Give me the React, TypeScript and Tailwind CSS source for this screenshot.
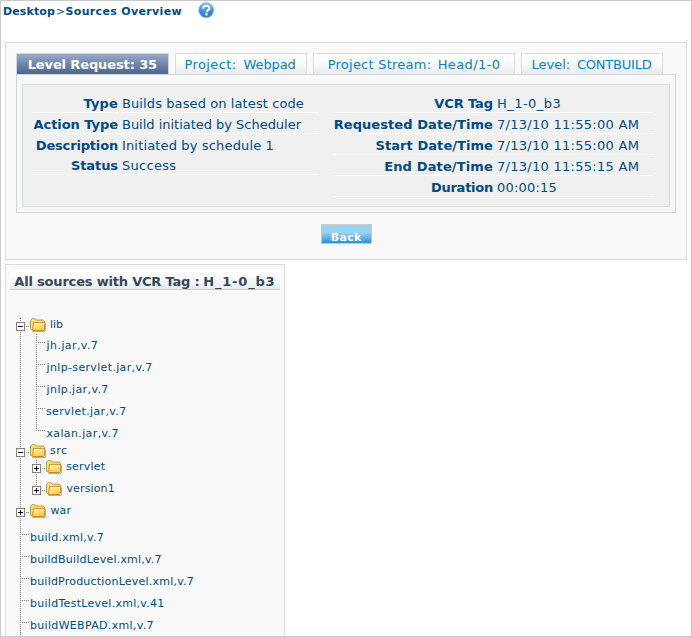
type Field = { label: string; value: string; lt: string; vt: string; plain?: boolean };

const leftFields: Field[] = [
  { label: "Type", value: "Builds based on latest code", lt: "tracking-[0.15px]", vt: "tracking-[0.1px]" },
  { label: "Action Type", value: "Build initiated by Scheduler", lt: "tracking-[-0.05px]", vt: "tracking-[-0.02px]" },
  { label: "Description", value: "Initiated by schedule 1", lt: "tracking-[-0.17px]", vt: "tracking-[0.15px]", plain: true },
  { label: "Status", value: "Success", lt: "tracking-[-0.08px]", vt: "tracking-[0.3px]" },
];

const rightFields: Field[] = [
  { label: "VCR Tag", value: "H_1-0_b3", lt: "tracking-[-0.1px]", vt: "tracking-[0.46px]" },
  { label: "Requested Date/Time", value: "7/13/10 11:55:00 AM", lt: "tracking-[0.08px]", vt: "tracking-[0.28px]" },
  { label: "Start Date/Time", value: "7/13/10 11:55:00 AM", lt: "tracking-[0.06px]", vt: "tracking-[0.28px]" },
  { label: "End Date/Time", value: "7/13/10 11:55:15 AM", lt: "tracking-[0.14px]", vt: "tracking-[0.28px]" },
  { label: "Duration", value: "00:00:15", lt: "tracking-[-0.25px]", vt: "tracking-[0.2px]" },
];

type Node = {
  name: string;
  depth: 0 | 1;
  kind: "open" | "closed" | "leaf";
  tight?: boolean;
  last?: boolean;
  cls: string;
};

const nodes: Node[] = [
  { name: "lib", depth: 0, kind: "open", tight: true, cls: "pl-[4px] tracking-[0px]" },
  { name: "jh.jar,v.7", depth: 1, kind: "leaf", cls: "pl-[0.6px] tracking-[0.42px]" },
  { name: "jnlp-servlet.jar,v.7", depth: 1, kind: "leaf", cls: "pl-[0.6px] tracking-[0.34px]" },
  { name: "jnlp.jar,v.7", depth: 1, kind: "leaf", cls: "pl-[0.6px] tracking-[0.38px]" },
  { name: "servlet.jar,v.7", depth: 1, kind: "leaf", cls: "pl-0 tracking-[0.36px]" },
  { name: "xalan.jar,v.7", depth: 1, kind: "leaf", last: true, cls: "pl-[0.4px] tracking-[0.38px]" },
  { name: "src", depth: 0, kind: "open", tight: true, cls: "pl-[4px] tracking-[0.5px]" },
  { name: "servlet", depth: 1, kind: "closed", cls: "pl-[4.2px] tracking-[0.2px]" },
  { name: "version1", depth: 1, kind: "closed", last: true, cls: "pl-[4.4px] tracking-[0.15px]" },
  { name: "war", depth: 0, kind: "closed", cls: "pl-[4.5px] tracking-[0.1px]" },
  { name: "build.xml,v.7", depth: 0, kind: "leaf", cls: "pl-0 tracking-[0.28px]" },
  { name: "buildBuildLevel.xml,v.7", depth: 0, kind: "leaf", cls: "pl-0 tracking-[0.2px]" },
  { name: "buildProductionLevel.xml,v.7", depth: 0, kind: "leaf", cls: "pl-0 tracking-[0.21px]" },
  { name: "buildTestLevel.xml,v.41", depth: 0, kind: "leaf", cls: "pl-0 tracking-[0.28px]" },
  { name: "buildWEBPAD.xml,v.7", depth: 0, kind: "leaf", cls: "pl-0 tracking-[0.32px]" },
];

function HelpIcon() {
  return (
    <svg width="17" height="17" viewBox="0 0 17 17">
      <defs>
        <linearGradient id="help" x1="0" y1="0" x2="0" y2="1">
          <stop offset="0" stopColor="#86bce8" />
          <stop offset="0.5" stopColor="#4494d6" />
          <stop offset="1" stopColor="#2a7cc2" />
        </linearGradient>
      </defs>
      <circle cx="8.2" cy="8.2" r="7.6" fill="url(#help)" stroke="#9fc2de" strokeWidth="0.8" />
      <path
        d="M5.1 6.7C5.1 4.8 6.4 3.8 8.3 3.8C10.2 3.8 11.4 4.8 11.4 6.2C11.4 8.1 8.6 8.3 8.5 10.2"
        fill="none"
        stroke="#fff"
        strokeWidth="2.1"
      />
      <rect x="7.3" y="11.3" width="2.3" height="2.1" fill="#fff" />
    </svg>
  );
}

function Folder() {
  return (
    <svg width="16" height="14" viewBox="0 0 16 14" className="shrink-0">
      <defs>
        <linearGradient id="folder" x1="0" y1="0" x2="0.3" y2="1">
          <stop offset="0" stopColor="#fff7bd" />
          <stop offset="1" stopColor="#fccb45" />
        </linearGradient>
      </defs>
      <path d="M2.4 13.4H14.6L15.7 12.2V5.4" fill="none" stroke="#9c968c" strokeWidth="0.9" />
      <path
        d="M0.5 10.4V2.3L2.2 0.7H4.8L6.4 2H13.2L14.4 3.2V11L13 12.5H2.6Z"
        fill="#fbe28a"
        stroke="#c4891c"
        strokeWidth="0.9"
      />
      <path d="M3.3 4.4H14.9L14.5 11.6L13.6 12.5H3.2L2.6 11.8Z" fill="url(#folder)" stroke="#c4891c" strokeWidth="0.9" />
    </svg>
  );
}

function Guide({ height }: { height: number }) {
  return (
    <svg width="16" height={height} className="shrink-0" shapeRendering="crispEdges">
      <path d={`M4.5 0V${height}`} stroke="#808080" strokeDasharray="1 1" />
    </svg>
  );
}

function Gutter({ node, height }: { node: Node; height: number }) {
  const leaf = node.kind === "leaf";
  return (
    <svg width="14" height={height} className="shrink-0" shapeRendering="crispEdges" fill="none">
      <path d={`M4.5 0V${node.last ? 9 : height}`} stroke="#808080" strokeDasharray="1 1" />
      <path d="M4 8.5H13" stroke="#808080" strokeDasharray="1 1" />
      {!leaf && (
        <>
          <rect x="0.5" y="4.5" width="8" height="8" fill="#fff" stroke="#808080" />
          <path d={node.kind === "open" ? "M2 8.5H7" : "M2 8.5H7M4.5 6V11"} stroke="#000" />
        </>
      )}
    </svg>
  );
}

function TreeRow({ node }: { node: Node }) {
  const height = node.tight ? 16 : 22;
  return (
    <div className={`flex shrink-0 items-start ${node.tight ? "h-4" : "h-[22px]"}`}>
      {node.depth === 1 && <Guide height={height} />}
      <Gutter node={node} height={height} />
      {node.kind !== "leaf" && <Folder />}
      <span className={`whitespace-pre ${node.kind === "leaf" ? "mt-[5px]" : ""} ${node.cls}`}>{node.name}</span>
    </div>
  );
}

function Fields({ rows, labelWidth, valueWidth }: { rows: Field[]; labelWidth: string; valueWidth: string }) {
  return (
    <div className="flex flex-col">
      {rows.map((f) => {
        const cell = f.plain ? "h-5" : "h-[21px] border-b border-white";
        return (
          <div key={f.label} className="flex gap-[2px] whitespace-pre">
            <div className={`flex justify-end pt-1 pr-[1px] font-bold ${cell} ${labelWidth} ${f.lt}`}>{f.label}</div>
            <div className={`pt-1 pl-px ${cell} ${valueWidth} ${f.vt}`}>{f.value}</div>
          </div>
        );
      })}
    </div>
  );
}

const tabBase = "h-[21px] border border-b-0 pt-[3px] flex whitespace-pre";
const tabIdle = "border-[#dcdcdc] bg-linear-to-b from-white from-30% to-[#e9ebec] text-[#0082c8]";

export default function App() {
  return (
    <div className="flex h-[637px] w-[692px] flex-col overflow-hidden border border-[#c9c9c9] bg-white font-['DejaVu_Sans',Verdana,sans-serif] text-[13px] leading-[15px] text-[#004b80]">
      <header className="flex h-[41px] shrink-0 items-start pt-1 pl-[2px] text-[11px] leading-[13px] whitespace-pre">
        <span className="w-[53px] font-bold tracking-[0.12px]">Desktop</span>
        <span className="w-[9.5px]">&gt;</span>
        <span className="w-[132px] font-bold tracking-[0.34px]">Sources Overview</span>
        <span className="-mt-[3px]">
          <HelpIcon />
        </span>
      </header>

      <section className="ml-1 h-[218px] w-[682px] shrink-0 border border-[#dcdcdc] bg-[#f9f9f9] pt-[10px] pl-[10px]">
        <nav className="flex gap-[6px]">
          <div className={`${tabBase} w-[153px] border-[#d3d6d8] bg-linear-to-b from-[#9aaac9] to-[#4e648c] pl-[10.7px] font-bold tracking-[-0.12px] text-white`}>
            Level Request: 35
          </div>
          <div className={`${tabBase} ${tabIdle} w-[132px] pl-[8.5px]`}>
            <span className="w-[59px] tracking-[0.4px]">Project:</span>
            <span className="tracking-[-0.1px]">Webpad</span>
          </div>
          <div className={`${tabBase} ${tabIdle} w-[202px] pl-[13.7px]`}>
            <span className="w-[110px] tracking-[0.24px]">Project Stream:</span>
            <span className="tracking-[0.38px]">Head/1-0</span>
          </div>
          <div className={`${tabBase} ${tabIdle} w-[142px] pl-[9.5px]`}>
            <span className="w-[45.5px]">Level:</span>
            <span className="tracking-[-0.22px]">CONTBUILD</span>
          </div>
        </nav>

        <div className="h-[139px] w-[660px] border border-[#cfd8d8] pt-[9px] pl-[5px]">
          <div className="flex h-[123px] w-[648px] gap-[14px] border border-[#dcdcdc] bg-[#f0f0f0] pt-[7px] pl-[9px]">
            <Fields rows={leftFields} labelWidth="w-[87px]" valueWidth="w-[198px]" />
            <Fields rows={rightFields} labelWidth="w-[161px]" valueWidth="w-[158px]" />
          </div>
        </div>

        <button
          type="button"
          className="mt-[11px] ml-[305px] flex h-5 w-[51px] items-start border border-[#c8c8c8] bg-linear-to-b from-[#9bd2f2] from-40% to-[#2492d8] pt-[6px] pl-[8.7px] text-[11px] leading-[13px] font-bold tracking-[0.35px] text-white"
        >
          Back
        </button>
      </section>

      <section className="mt-1 ml-1 flex min-h-0 w-[280px] flex-1 flex-col overflow-hidden border border-b-0 border-[#dcdcdc] bg-[#f9f9f9] pt-1">
        <h2 className="ml-1 flex h-[21px] w-[270px] shrink-0 border-b border-[#cccccc] bg-linear-to-b from-white from-30% to-[#e9ebec] pt-[5px] pl-[4.3px] font-bold whitespace-pre text-[#34475c]">
          <span className="w-[189px] tracking-[-0.19px]">All sources with VCR Tag :</span>
          <span className="tracking-[0.8px]">H_1-0_b3</span>
        </h2>
        <div className="mt-7 flex flex-col pl-[10px] text-[11px] leading-[13px]">
          {nodes.map((n) => (
            <TreeRow key={`${n.depth}${n.name}`} node={n} />
          ))}
        </div>
      </section>
    </div>
  );
}
